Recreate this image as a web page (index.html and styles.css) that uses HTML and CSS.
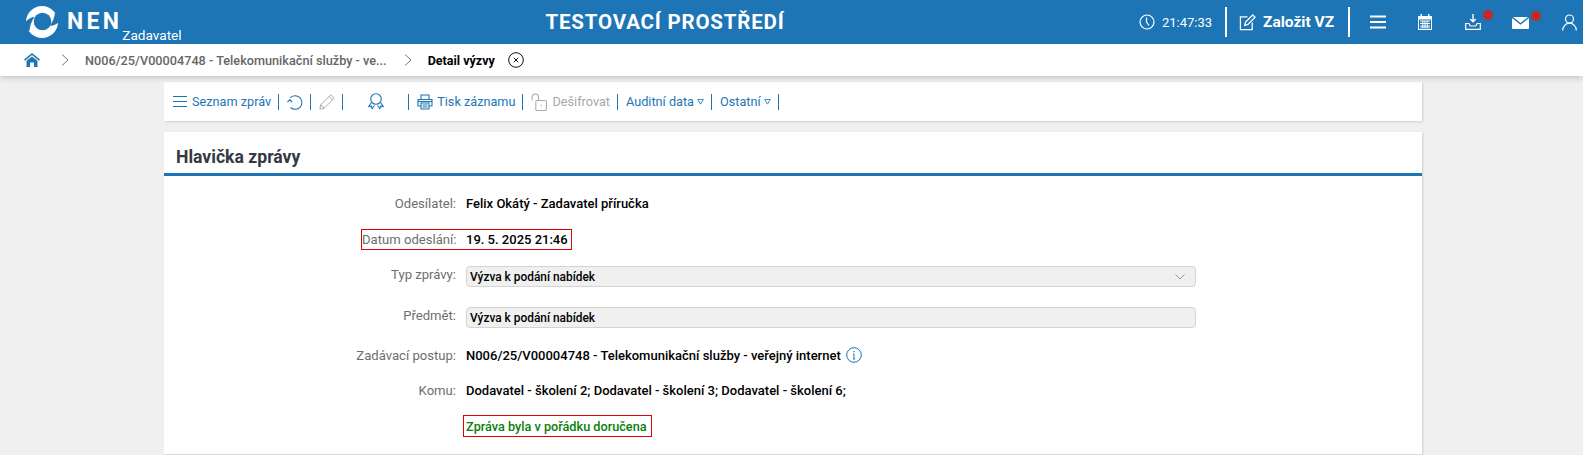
FILE: index.html
```html
<!DOCTYPE html>
<html lang="cs">
<head>
<meta charset="utf-8">
<title>Detail výzvy</title>
<link rel="stylesheet" href="styles.css">
</head>
<body>
<header class="topbar">
  <div class="brand">
    <svg class="logo" viewBox="0 0 32 32" width="32" height="32" aria-hidden="true">
      <circle cx="16" cy="16" r="16" fill="#fff"/>
      <circle cx="16.500" cy="15.500" r="8.800" fill="#1d75b5"/>
      <path fill="#1d75b5" d="M24 19.500C26.500 16 28.500 11.500 29 7l4 1v8c-3 2.500-6 4.300-9 3.500z"/>
      <path fill="#1d75b5" d="M8.500 11C5.500 15 3.800 20 3.500 25L-1 23v-7c3-2.500 6-5 9.500-5z"/>
    </svg>
    <span class="nen">NEN</span>
    <span class="role">Zadavatel</span>
  </div>
  <div class="env">TESTOVACÍ PROSTŘEDÍ</div>
  <div class="tools">
    <svg class="ic-clock" viewBox="0 0 16 16" width="16" height="16" fill="none" stroke="#fff" stroke-width="1.200"><circle cx="8" cy="8" r="7"/><path d="M7.500 3.500V8l2.500 3.500"/></svg>
    <span class="time">21:47:33</span>
    <span class="tsep"></span>
    <svg class="ic-new" viewBox="0 0 18 18" width="17" height="17" fill="none" stroke="#fff" stroke-width="1.300"><path d="M9 3H1.500v13.500H14V9"/><path d="M6 12l1-3.500L14.500 1 17 3.500 9.500 11z"/></svg>
    <span class="new">Založit VZ</span>
    <span class="tsep"></span>
    <svg class="ic-burger" viewBox="0 0 16 14" width="16" height="14" fill="none" stroke="#fff" stroke-width="2"><path d="M0 1.500h16M0 7h16M0 12.500h16"/></svg>
    <svg class="ic-cal" viewBox="0 0 16 16" width="16" height="16"><path fill="#fff" d="M1 2h2.500V0h1.500v2h6V0h1.500v2H15v14H1zM2 5.500V15h12V5.500z"/><path fill="#fff" d="M3 6.500h10v1H3zM3 9h10v1H3zM3 11.500h10v1H3zM3 13.500h10v.8H3zM5.300 6.500h1v7.500h-1zM7.500 6.500h1v7.500h-1zM9.700 6.500h1v7.500h-1z"/></svg>
    <span class="notif">
      <svg viewBox="0 0 16 16" width="16" height="16" fill="none" stroke="#fff" stroke-width="1.200"><path d="M8 0v7.500M5.300 5L8 7.800 10.700 5" stroke-width="1.400"/><path d="M4 9.500H.7v5.800h14.600V9.500H12"/><path d="M4 9.500l1.200 2.500h5.600L12 9.500"/></svg>
      <i class="dot"></i>
    </span>
    <span class="notif mail">
      <svg viewBox="0 0 17 12" width="17" height="12"><path fill="#fff" d="M1 0h15L8.500 6zM0 1l8.500 6.800L17 1v10a1 1 0 0 1-1 1H1a1 1 0 0 1-1-1z"/></svg>
      <i class="dot"></i>
    </span>
    <svg class="ic-user" viewBox="0 0 15 17" width="15" height="17" fill="none" stroke="#fff" stroke-width="1.200"><circle cx="7.500" cy="5" r="4"/><path d="M.7 16.500c0-4 3-7.300 6.800-7.300s6.800 3.300 6.800 7.300"/></svg>
  </div>
</header>

<nav class="crumbs">
  <svg class="home" viewBox="0 0 16 14" width="16" height="16"><path fill="#1d75b5" d="M8 0l8 6.500-1 1.200L8 2 1 7.700 0 6.500z"/><path fill="#1d75b5" d="M2.500 7.800L8 3.400l5.500 4.400V14H10V9.500H6V14H2.500z"/></svg>
  <svg class="chev" viewBox="0 0 8 12" width="8" height="12" fill="none" stroke="#777" stroke-width="1"><path d="M1 .5L7 6l-6 5.500"/></svg>
  <a class="crumb">N006/25/V00004748 - Telekomunikační služby - ve...</a>
  <svg class="chev" viewBox="0 0 8 12" width="8" height="12" fill="none" stroke="#777" stroke-width="1"><path d="M1 .5L7 6l-6 5.500"/></svg>
  <span class="current">Detail výzvy</span>
  <svg class="close" viewBox="0 0 16 16" width="16" height="16" fill="none" stroke="#111" stroke-width="1"><circle cx="8" cy="8" r="7.300"/><path d="M5.800 5.800l4.400 4.400M10.200 5.800l-4.400 4.400"/></svg>
</nav>

<main class="page">
  <div class="toolbar">
    <a class="tb tb-list"><svg viewBox="0 0 14 11" width="14" height="11" fill="none" stroke="#1d75b5" stroke-width="1"><path d="M0 .5h14M0 5.500h14M0 10.500h14"/></svg>Seznam zpráv</a>
    <span class="tb-sep"></span>
    <a class="tb"><svg viewBox="0 0 16 16" width="16" height="16" fill="none" stroke="#1d75b5" stroke-width="1.100"><path d="M3 4A6.800 6.800 0 1 1 3.500 13.500"/><path d="M.5 8l2.300-2.200L5.100 8"/></svg></a>
    <span class="tb-sep"></span>
    <a class="tb"><svg viewBox="0 0 16 16" width="16" height="16" fill="none" stroke="#aaa" stroke-width="1"><path d="M.8 15.200l1-4.500L11.800.8l3.400 3.400-10 10z"/><path d="M1.800 10.700l3.400 3.500M10 2.500l3.500 3.500"/></svg></a>
    <span class="tb-sep"></span>
    <a class="tb tb-cert"><svg viewBox="0 0 16 17" width="16" height="17" fill="none" stroke="#1d75b5" stroke-width="1.100"><circle cx="8" cy="6" r="5.300"/><path d="M3.500 9.500L.8 13.500l2.500-.3.900 2.500 2.300-3.200M12.500 9.500l2.700 4-2.500-.3-.9 2.500-2.300-3.200"/></svg></a>
    <span class="tb-sep"></span>
    <a class="tb tb-print"><svg viewBox="0 0 16 16" width="16" height="16" fill="none" stroke="#1d75b5" stroke-width="1.100"><path d="M4 5V1h8v4M4 12H1V5.500h14V12h-3"/><path d="M4 9h8v6H4zM5.500 11h5M5.500 13h5"/><path d="M1 7.500h14"/></svg>Tisk záznamu</a>
    <span class="tb-sep"></span>
    <a class="tb tb-off"><svg viewBox="0 0 15 17" width="18" height="18" fill="none" stroke="#aaa" stroke-width="1"><path d="M1 7V4a3 3 0 0 1 6 0v3"/><rect x="4.500" y="7" width="10" height="9.500" rx="1"/><path d="M9.500 11v1.500"/></svg>Dešifrovat</a>
    <span class="tb-sep"></span>
    <a class="tb tb-drop">Auditní data<svg class="tri" viewBox="0 0 8 7" width="7" height="6" fill="none" stroke="#1d75b5" stroke-width="1"><path d="M.7.500h6.600L4 6z"/></svg></a>
    <span class="tb-sep"></span>
    <a class="tb tb-drop">Ostatní<svg class="tri" viewBox="0 0 8 7" width="7" height="6" fill="none" stroke="#1d75b5" stroke-width="1"><path d="M.7.500h6.600L4 6z"/></svg></a>
    <span class="tb-sep"></span>
  </div>

  <section class="card">
    <h2 class="card-title">Hlavička zprávy</h2>
    <div class="rows">
      <div class="row r1"><span class="lab">Odesílatel:</span><span class="val">Felix Okátý - Zadavatel příručka</span></div>
      <div class="row r2"><div class="mark"><span class="lab lab-date">Datum odeslání:</span><span class="val">19. 5. 2025 21:46</span></div></div>
      <div class="row r3"><span class="lab lab-top">Typ zprávy:</span><div class="field"><span>Výzva k podání nabídek</span><svg viewBox="0 0 10 6" width="10" height="6" fill="none" stroke="#999" stroke-width="1"><path d="M.5.500L5 5 9.500.500"/></svg></div></div>
      <div class="row r4"><span class="lab lab-top">Předmět:</span><div class="field"><span>Výzva k podání nabídek</span></div></div>
      <div class="row r5"><span class="lab">Zadávací postup:</span><span class="val">N006/25/V00004748 - Telekomunikační služby - veřejný internet</span><svg class="info" viewBox="0 0 16 16" width="16" height="16" fill="none" stroke="#1d75b5" stroke-width="1"><circle cx="8" cy="8" r="7.300"/><path d="M8 7v5M7 7h1M7 12h2.200"/><path d="M8 4v1.200" stroke-width="1.300"/></svg></div>
      <div class="row r6"><span class="lab">Komu:</span><span class="val">Dodavatel - školení 2; Dodavatel - školení 3; Dodavatel - školení 6;</span></div>
      <div class="row r7"><span class="ok">Zpráva byla v pořádku doručena</span></div>
    </div>
  </section>
</main>
</body>
</html>
```

FILE: styles.css
```css
* { box-sizing: border-box; }
html, body { margin: 0; padding: 0; }
body {
  width: 1583px; height: 455px; overflow: hidden;
  background: #f0f0f0;
  font-family: Roboto, "Liberation Sans", sans-serif;
  font-size: 13px; color: #000;
}
.topbar {
  height: 44px; background: #1d75b5; color: #fff;
  display: flex; align-items: center; position: relative; z-index: 2;
}
.brand { display: flex; width: 507px; padding-left: 26px; align-items: flex-start; height: 44px; }
.logo { margin-top: 6px; flex: none; }
.nen { font-size: 23px; font-weight: 700; letter-spacing: 3.300px; margin: 8px 0 0 9px; line-height: 27px; }
.role { font-size: 13.600px; line-height: 16px; margin: 27px 0 0 0; }
.env { font-size: 20.500px; font-weight: 700; width: 316px; text-align: center; letter-spacing: .8px; white-space: nowrap; }
.tools { display: flex; align-items: center; padding-left: 316px; height: 44px; }
.tools > svg, .notif { flex: none; }
.time { font-size: 13px; margin-left: 7px; width: 50px; white-space: nowrap; }
.tsep { width: 2px; height: 30px; background: #fff; flex: none; }
.time + .tsep { margin-left: 13px; }
.ic-new { margin-left: 12px; }
.new { font-size: 15.500px; font-weight: 700; margin-left: 7px; width: 73px; white-space: nowrap; }
.new + .tsep { margin-left: 12px; }
.ic-burger { margin-left: 20px; }
.ic-cal { margin-left: 31px; }
.notif { position: relative; display: flex; margin-left: 32px; }
.notif.mail { margin-left: 31px; margin-top: 2px; }
.dot { position: absolute; width: 10px; height: 10px; border-radius: 50%; background: #c62828; left: 18px; top: -4px; }
.mail .dot { left: 19px; top: -6px; }
.ic-user { margin-left: 33px; }

.crumbs {
  height: 32px; background: #fff; display: flex; align-items: center;
  padding-left: 24px; box-shadow: 0 2px 6px rgba(0,0,0,.18); position: relative; z-index: 1;
}
.chev { flex: none; }
.home + .chev { margin-left: 21px; }
.crumb { color: #666; font-weight: 500; font-size: 12.700px; margin-left: 16px; white-space: nowrap; }
.crumb + .chev { margin-left: 17px; }
.current { font-weight: 700; font-size: 12.500px; margin-left: 16px; white-space: nowrap; }
.close { margin-left: 13px; }

.page { width: 1258px; margin-left: 164px; padding-top: 6px; }
.toolbar {
  height: 39px; background: #fff; display: flex; align-items: center;
  padding: 0 0 0 9px; box-shadow: 1px 1px 2px rgba(0,0,0,.14);
}
.tb { display: flex; align-items: center; gap: 4px; white-space: nowrap; font-size: 12.700px; color: #1d75b5; }
.tb-list { gap: 5px; }
.tb-sep { width: 1px; height: 16px; background: #1d75b5; margin: 0 8px 0 7px; flex: none; }
.tb-cert { padding: 0 17px; }
.tb-off { color: #a8a8a8; }
.tb-off svg { margin-left: -1px; }
.tb-drop { gap: 3px; }
.card { margin-top: 11px; background: #fff; height: 322px; box-shadow: 1px 1px 2px rgba(0,0,0,.14); }
.card-title {
  margin: 0; height: 44px; padding: 13px 0 0 12px; font-size: 17.600px; line-height: 24px;
  font-weight: 700; color: #333a42; border-bottom: 3px solid #1d75b5;
}
.row { display: flex; align-items: center; height: 20px; }
.lab { width: 292px; text-align: right; color: #6e6e6e; flex: none; white-space: nowrap; font-size: 13.100px; }
.val { margin-left: 10px; font-weight: 500; white-space: nowrap; font-size: 13px; }
.r1 { margin-top: 17px; }
.r2 { margin-top: 16px; height: 21px; }
.mark { display: flex; align-items: center; margin-left: 197px; height: 21px; border: 1px solid #e00000; width: 211px; }
.lab-date { width: 94px; }
.r3 { margin-top: 16px; align-items: flex-start; height: 21px; }
.r4 { margin-top: 20px; align-items: flex-start; height: 21px; }
.field {
  margin-left: 10px; width: 730px; height: 21px; background: #f0f0f0;
  border: 1px solid #d4d4d4; border-radius: 4px; display: flex; align-items: center;
  justify-content: space-between; padding: 0 10px 0 3px; font-weight: 500; font-size: 11.900px;
}
.lab-top { line-height: 17px; }
.r5 { margin-top: 17px; }
.info { margin-left: 5px; }
.r6 { margin-top: 15px; }
.r7 { margin-top: 16px; }
.ok {
  margin-left: 299px; height: 22px; line-height: 21px; width: 189px; padding-left: 2px;
  border: 1px solid #e00000; color: #0a800a; font-weight: 500; font-size: 12.700px; white-space: nowrap;
}
```
